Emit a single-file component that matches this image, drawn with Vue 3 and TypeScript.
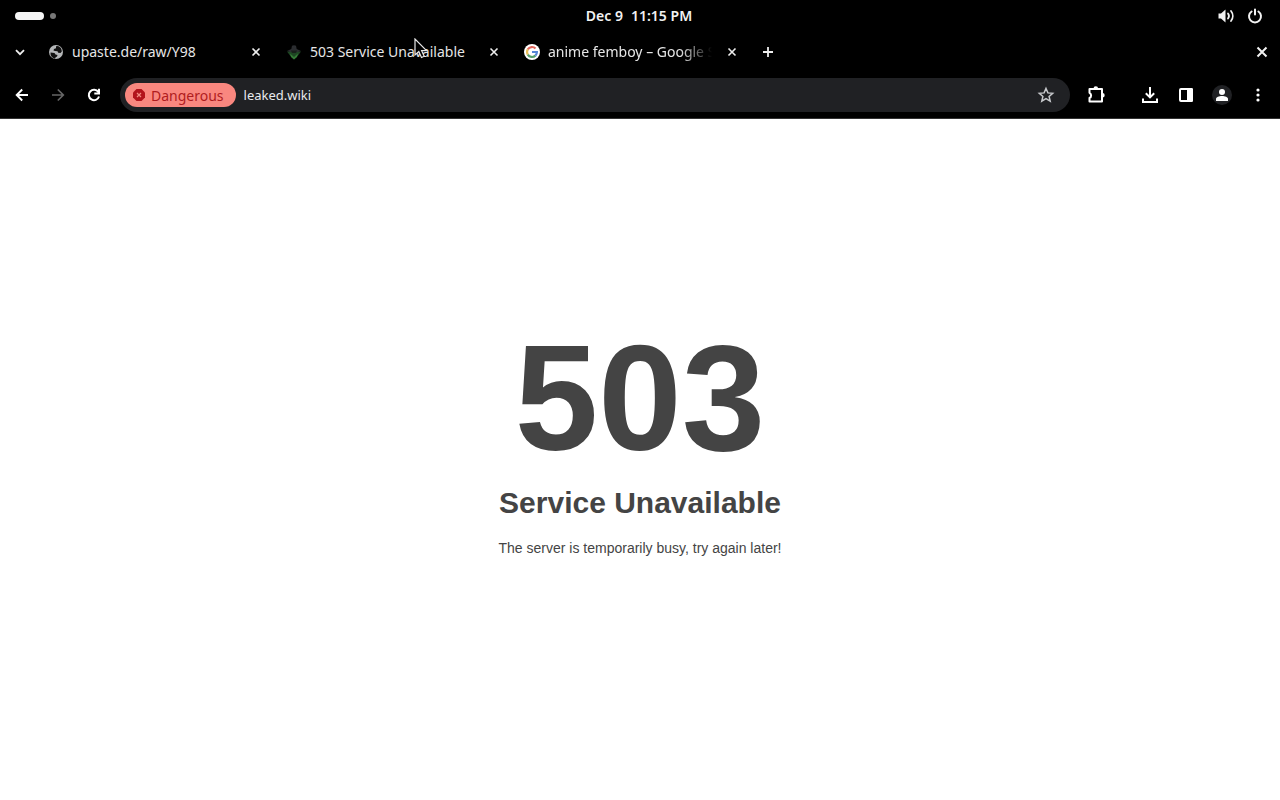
<script setup lang="ts">
import { ref } from 'vue'

interface Tab {
  id: string
  title: string
  icon: 'globe' | 'hat' | 'google'
  long?: boolean
}

const tabs: Tab[] = [
  { id: 'paste', title: 'upaste.de/raw/Y98', icon: 'globe' },
  { id: 'service', title: '503 Service Unavailable', icon: 'hat' },
  { id: 'search', title: 'anime femboy – Google Search', icon: 'google', long: true },
]

const address = ref('leaked.wiki')
</script>

<template>
  <div class="desktop">
    <header class="topbar">
      <button class="workspaces" aria-label="Workspaces"><span class="pill"></span><span class="dot"></span></button>
      <time class="clock"><span>Dec 9</span><span>11:15 PM</span></time>
      <button class="status" aria-label="System menu">
        <svg width="18" height="16" viewBox="0 0 18 16" fill="none" stroke="#f2f2f2" stroke-width="1.8" stroke-linecap="round">
          <path d="M.5 5.500h2.500L7.500 1.500v13L3 10.500H.5z" fill="#f2f2f2" stroke="none" />
          <path d="M10 5.500a4 4 0 0 1 0 5" />
          <path d="M13 3a8 8 0 0 1 0 10" />
        </svg>
        <svg width="16" height="16" viewBox="0 0 16 16" fill="none" stroke="#f2f2f2" stroke-width="2" stroke-linecap="round">
          <path d="M4.600 3.500a6 6 0 1 0 6.800 0M8 1.500v5" />
        </svg>
      </button>
    </header>

    <nav class="tabstrip" aria-label="Tabs">
      <button class="icon-btn search-tabs" aria-label="Search tabs">
        <svg width="12" height="12" viewBox="0 0 12 12" fill="none" stroke="#eee" stroke-width="1.800"><path d="M2 4.200 6 8.200l4-4" /></svg>
      </button>
      <div v-for="tab in tabs" :key="tab.id" class="tab">
        <svg v-if="tab.icon === 'globe'" class="favicon" viewBox="0 0 16 16">
          <circle cx="8" cy="8" r="7" fill="#b4b6b8" />
          <path d="M2.500 8.500 6.500 9l1 1.500 2 .5-.5 1.500-1.500 1-.5 1.200A6 6 0 0 1 2.500 8.500zM8 2.200l2-.2a6 6 0 0 1 3.800 5.500l-1.300 1.500-2.300-.2-.7-1.500L7 7l-1.500-.5.5-1.500 2-.8z" fill="#111" />
        </svg>
        <svg v-else-if="tab.icon === 'hat'" class="favicon" viewBox="0 0 16 16">
          <path d="M5.300 5 6 1.800 8 1.300l2 .5.7 3.200 4.300 2-4 1.500H5L1 7z" fill="#2b2d30" />
          <path d="M1 7.500 5.500 8 8 9l2.500-1 4.500-.5-3 4L8 15.500 4 11.500z" fill="#1e4623" />
          <path d="m4 9.500 4 3.500 4-3.500-1 3.500-3 2.500L5 13z" fill="#347a36" />
          <path d="M5 6.500h6L10 9H6z" fill="#18201b" />
        </svg>
        <svg v-else class="favicon" viewBox="0 0 16 16" fill="none">
          <circle cx="8" cy="8" r="8" fill="#fff" />
          <g stroke-width="2.200">
            <path d="M11.500 4.500A4.900 4.900 0 0 0 3.800 5.400" stroke="#e0675c" />
            <path d="M3.800 5.400a4.900 4.900 0 0 0 0 5.200" stroke="#e8bd58" />
            <path d="M3.800 10.600a4.900 4.900 0 0 0 7.600 1" stroke="#56a06c" />
            <path d="M11.400 11.600A4.900 4.900 0 0 0 12.900 8H8" stroke="#5585d6" />
          </g>
        </svg>
        <a class="tab-title" :class="{ faded: tab.long }" href="#">{{ tab.title }}</a>
        <button class="icon-btn close" :aria-label="'Close ' + tab.title">
          <svg width="10" height="10" viewBox="0 0 10 10" stroke="#eee" stroke-width="1.600"><path d="m1.500 1.500 7 7m0-7-7 7" /></svg>
        </button>
      </div>
      <button class="icon-btn new-tab" aria-label="New tab">
        <svg width="12" height="12" viewBox="0 0 12 12" stroke="#eee" stroke-width="1.800"><path d="M6 1v10M1 6h10" /></svg>
      </button>
      <button class="icon-btn window-close" aria-label="Close window">
        <svg width="12" height="12" viewBox="0 0 12 12" stroke="#f2f2f2" stroke-width="2"><path d="m1.500 1.500 9 9m0-9-9 9" /></svg>
      </button>
      <svg class="pointer" width="14" height="22" viewBox="0 0 14 22" fill="#000" stroke="#e8e8e8" stroke-width="1.200">
        <path d="M1 1v16l3.800-3.500 2.700 6 2.700-1.200-2.600-5.600h4.900z" />
      </svg>
    </nav>

    <div class="toolbar">
      <div class="nav-buttons">
        <button class="icon-btn" aria-label="Back">
          <svg width="16" height="16" viewBox="0 0 16 16" fill="none" stroke="#fff" stroke-width="1.900"><path d="M14 8H3M8.200 2.500 2.700 8l5.500 5.500" /></svg>
        </button>
        <button class="icon-btn" aria-label="Forward">
          <svg width="16" height="16" viewBox="0 0 16 16" fill="none" stroke="#666" stroke-width="1.700"><path d="M2 8h11M7.800 2.500 13.300 8l-5.500 5.500" /></svg>
        </button>
        <button class="icon-btn" aria-label="Reload">
          <svg width="16" height="16" viewBox="0 0 16 16" fill="none" stroke="#fff" stroke-width="2"><path d="M13 9.500A5.200 5.200 0 1 1 12.300 5M13 1.800v4.700H8.300" /></svg>
        </button>
      </div>
      <form class="omnibox" @submit.prevent>
        <button type="button" class="danger">
          <svg width="12" height="12" viewBox="0 0 12 12">
            <path d="M3.500 0h5L12 3.500v5L8.500 12h-5L0 8.500v-5z" fill="#b3141c" />
            <path d="m4 4 4 4m0-4L4 8" stroke="#f28b82" stroke-width="1.200" />
          </svg>
          Dangerous
        </button>
        <input v-model="address" class="address" type="text" aria-label="Address" spellcheck="false" />
        <button type="button" class="icon-btn" aria-label="Bookmark this page">
          <svg width="18" height="18" viewBox="0 0 18 18" fill="none" stroke="#c7c9cc" stroke-width="1.500"><path d="m9 2.500 1.900 4.400 4.800.4-3.600 3.200 1.100 4.700L9 12.700l-4.200 2.500 1.100-4.700-3.600-3.200 4.800-.4z" /></svg>
        </button>
      </form>
      <div class="actions">
        <button class="icon-btn extensions" aria-label="Extensions">
          <svg width="20" height="20" viewBox="0 0 20 20" fill="none" stroke="#fff" stroke-width="2" stroke-linejoin="round">
            <path d="M3.500 4H16v12.500H3.500v-3.500a2.900 2.900 0 0 0 0-5.200z" />
            <path d="M7.500 3.500a2.300 2.300 0 0 1 4.600 0zM16.500 8a2.200 2.200 0 0 1 0 4.400z" fill="#fff" stroke="none" />
          </svg>
        </button>
        <button class="icon-btn" aria-label="Downloads">
          <svg width="18" height="18" viewBox="0 0 18 18" fill="none" stroke="#fff" stroke-width="2"><path d="M9 1v10M4.800 7.200 9 11.400l4.200-4.200M2 12.500V16h14v-3.500" /></svg>
        </button>
        <button class="icon-btn" aria-label="Side panel">
          <svg width="16" height="16" viewBox="0 0 16 16"><rect x="2" y="2" width="12" height="12" rx="1" fill="none" stroke="#fff" stroke-width="2" /><path d="M9 1h5l1 1v12l-1 1H9z" fill="#fff" /></svg>
        </button>
        <button class="icon-btn" aria-label="Profile">
          <svg width="20" height="20" viewBox="0 0 20 20"><circle cx="10" cy="10" r="10" fill="#202124" /><circle cx="10" cy="7" r="3" fill="#fff" /><path d="M4 16v-2c0-2 3-3 6-3s6 1 6 3v2z" fill="#fff" /></svg>
        </button>
        <button class="icon-btn" aria-label="Menu">
          <svg width="16" height="16" viewBox="0 0 16 16" fill="#fff"><circle cx="8" cy="3" r="1.600" /><circle cx="8" cy="8" r="1.600" /><circle cx="8" cy="13" r="1.600" /></svg>
        </button>
      </div>
    </div>

    <main class="page">
      <h1>503</h1>
      <h2>Service Unavailable</h2>
      <p>The server is temporarily busy, try again later!</p>
    </main>
  </div>
</template>

<style>
body {
  margin: 0;
  background: #fff;
}
</style>

<style scoped>
.desktop {
  min-height: 100vh;
  display: flex;
  flex-direction: column;
  font-family: "Noto Sans", sans-serif;
  font-size: 14px;
  color: #e6e6e6;
}
button {
  margin: 0;
  padding: 0;
  border: 0;
  background: none;
  color: inherit;
  font: inherit;
}
svg {
  display: block;
  flex: none;
}
.topbar {
  display: grid;
  grid-template-columns: 1fr auto 1fr;
  align-items: center;
  height: 32px;
  padding: 0 17px 0 15px;
  background: #000;
}
.workspaces {
  display: flex;
  align-items: center;
  gap: 6px;
  justify-self: start;
}
.pill {
  width: 29px;
  height: 8px;
  border-radius: 4px;
  background: #f6f6f6;
}
.dot {
  width: 6px;
  height: 6px;
  border-radius: 50%;
  background: #777;
}
.clock {
  display: flex;
  gap: 8px;
  padding-bottom: 2px;
  font-weight: 600;
  color: #f2f2f2;
}
.status {
  display: flex;
  gap: 11px;
  justify-self: end;
}
.tabstrip {
  position: relative;
  display: flex;
  align-items: center;
  height: 40px;
  padding-left: 8px;
  background: #000;
}
.icon-btn {
  display: flex;
  flex: none;
  align-items: center;
  justify-content: center;
  width: 36px;
  height: 32px;
}
.search-tabs {
  width: 24px;
}
.tab {
  display: flex;
  flex: 0 1 238px;
  align-items: center;
  min-width: 0;
  box-sizing: border-box;
  padding: 0 2px 0 16px;
}
.favicon {
  width: 16px;
  height: 16px;
  margin-right: 8px;
}
.tab-title {
  flex: 1;
  margin-right: 8px;
  padding-bottom: 2px;
  overflow: hidden;
  white-space: nowrap;
  color: inherit;
  text-decoration: none;
}
.faded {
  mask-image: linear-gradient(to left, transparent, #000 32px);
}
.close {
  width: 24px;
}
.new-tab {
  width: 28px;
  margin-left: 8px;
}
.window-close {
  margin-left: auto;
}
.pointer {
  position: absolute;
  left: 414px;
  top: 6px;
}
.toolbar {
  display: flex;
  align-items: center;
  height: 46px;
  padding: 0 4px;
  border-bottom: 1px solid #333;
  background: #000;
}
.nav-buttons,
.actions {
  display: flex;
}
.omnibox {
  display: flex;
  flex: 1;
  align-items: center;
  gap: 8px;
  min-width: 0;
  height: 34px;
  margin: 0 8px;
  padding: 0 6px 0 5px;
  border-radius: 17px;
  background: #202124;
}
.danger {
  display: flex;
  align-items: center;
  gap: 6px;
  height: 24px;
  padding: 0 12px 0 8px;
  border-radius: 12px;
  background: #f9877f;
  color: #b01c20;
}
.address {
  flex: 1;
  min-width: 0;
  padding: 0;
  border: 0;
  outline: 0;
  background: none;
  color: #e8eaed;
  font: inherit;
  font-size: 13px;
}
.extensions {
  margin-right: 18px;
}
.page {
  flex: 1;
  padding: 25.5vh 16px 16px;
  background: #fff;
  color: #444;
  font: 14px/20px "Liberation Sans", Arial, sans-serif;
  text-align: center;
}
.page h1 {
  margin: 0;
  font-size: 150px;
  line-height: 150px;
}
.page h2 {
  margin: 20px 0 25px;
  font-size: 30px;
  line-height: 20px;
}
.page p {
  margin: 0;
}
</style>
